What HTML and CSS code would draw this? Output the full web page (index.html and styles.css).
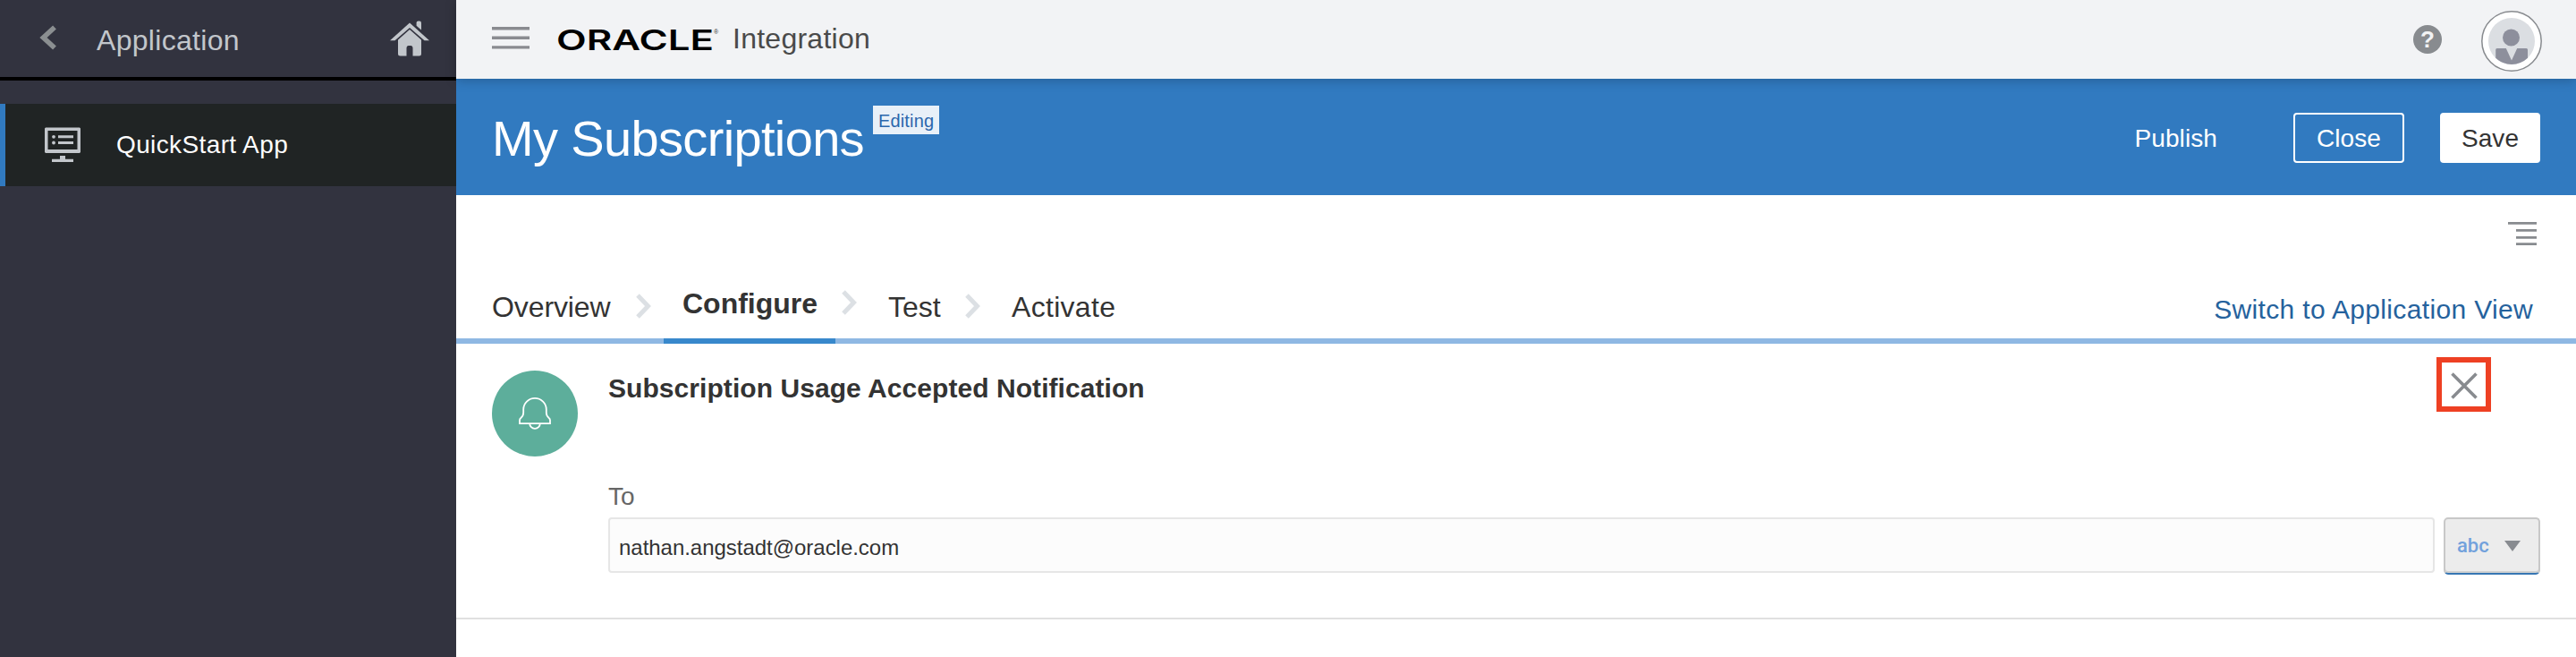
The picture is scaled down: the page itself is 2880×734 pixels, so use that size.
FILE: index.html
```html
<!DOCTYPE html>
<html lang="en">
<head>
<meta charset="utf-8">
<title>My Subscriptions - Oracle Integration</title>
<link rel="stylesheet" href="styles.css">
</head>
<body>
<div class="app">
  <aside class="sidebar">
    <div class="sidebar-head">
      <svg class="back-icon" width="20" height="28" viewBox="0 0 20 28"><path d="M17 2.5 4.5 14 17 25.500" fill="none" stroke="#8b8f91" stroke-width="5.600"/></svg>
      <span class="sidebar-title">Application</span>
      <svg class="home-icon" width="44" height="40" viewBox="0 0 44 40" fill="#c2c6cb"><path d="M22 2.500 44 22.300H38.500L22 8 5.500 22.300H0Z"/><path d="M29.600 2.500Q29.600.5 31.600.5H33Q35 .5 35 2.500V10.500L29.600 5.800Z"/><path d="M22 10 35 21.500V37Q35 39.500 32.500 39.500H25.500V30.500Q25.500 28 23.500 28H20.500Q18.500 28 18.500 30.500V39.500H11.500Q9 39.500 9 37V21.500Z"/></svg>
    </div>
    <nav>
      <a class="nav-item">
        <svg class="nav-icon" width="40" height="40" viewBox="0 0 40 40" fill="#c2c6cb"><path fill-rule="evenodd" d="M1 .5H39L40 1.500V28L39 29H1L0 28V1.500ZM3.500 4V25H36.500V4Z"/><path d="M15 9.300H32V12.300H15ZM15 16H32V19H15ZM17 32H23V35.700H32V39H8V35.700H17Z"/><circle cx="10" cy="10.800" r="1.900"/><circle cx="10" cy="17.500" r="1.900"/></svg>
        <span>QuickStart App</span>
      </a>
    </nav>
  </aside>
  <main class="main">
    <header class="topbar">
      <svg class="burger" width="42" height="25" viewBox="0 0 42 25" fill="#8a8b90"><path d="M0 0H42V3.400H0ZM0 10.600H42V14H0ZM0 21.200H42V24.600H0Z"/></svg>
      <svg class="brand" width="182" height="36" viewBox="0 0 182 36"><text class="brand-name" x="-1" y="29.500" textLength="176" lengthAdjust="spacingAndGlyphs">ORACLE</text><text class="brand-mark" x="175" y="12">®</text></svg>
      <span class="product">Integration</span>
      <span class="help">?</span>
      <svg class="avatar" width="68" height="68" viewBox="0 0 68 68"><circle cx="34" cy="34" r="33.200" fill="#fff" stroke="#888b8f" stroke-width="1.500"/><circle cx="34" cy="34" r="26" fill="#dbdee2"/><circle cx="33.500" cy="30" r="9.500" fill="#8d8f9c"/><path d="M16.200 43.500Q16.200 42 17.700 42H27.800L34 55.500 40.200 42H50.500Q52 42 52 43.500V52.800A26 26 0 0 1 16.200 52.800Z" fill="#8d8f9c"/></svg>
    </header>
    <section class="banner">
      <h1>My Subscriptions</h1>
      <span class="badge">Editing</span>
      <div class="actions">
        <button class="btn publish">Publish</button>
        <button class="btn close">Close</button>
        <button class="btn save">Save</button>
      </div>
    </section>
    <div class="toolbar">
      <svg width="32" height="26" viewBox="0 0 32 26" fill="#888b8f"><path d="M0 0H32V2.700H0ZM9 8H32V10.700H9ZM9 16H32V18.700H9ZM9 23.200H32V25.900H9Z"/></svg>
    </div>
    <nav class="tabs">
      <a class="tab overview">Overview</a>
      <svg class="chevron first" width="19" height="28" viewBox="0 0 19 28"><path d="M3 2 14.500 14 3 26"/></svg>
      <a class="tab active">Configure</a>
      <svg class="chevron second" width="19" height="28" viewBox="0 0 19 28"><path d="M3 2 14.500 14 3 26"/></svg>
      <a class="tab test">Test</a>
      <svg class="chevron third" width="19" height="28" viewBox="0 0 19 28"><path d="M3 2 14.500 14 3 26"/></svg>
      <a class="tab activate">Activate</a>
      <a class="switch">Switch to Application View</a>
    </nav>
    <section class="card">
      <div class="bell">
        <svg width="36" height="36" viewBox="0 0 36 36" fill="none" stroke="#fff" stroke-width="1.800"><path d="M1 29.200V25.500Q1 23.800 2.500 22.700 5.200 20.600 5.200 17V13.500A12.800 12.600 0 0 1 30.800 13.500V17Q30.800 20.600 33.500 22.700 35 23.800 35 25.500V29.200ZM12.200 29.200A5.800 5.600 0 0 0 23.800 29.200"/></svg>
      </div>
      <div class="card-body">
        <div class="card-head">
          <h2>Subscription Usage Accepted Notification</h2>
          <button class="remove"><svg width="30" height="30" viewBox="0 0 30 30"><path d="M1.500 1.500 28.500 28.500M28.500 1.500 1.500 28.500" stroke="#888b8f" stroke-width="3.600"/></svg></button>
        </div>
        <label class="label">To</label>
        <div class="field">
          <div class="input">nathan.angstadt@oracle.com</div>
          <button class="type"><span>abc</span><svg width="18" height="12" viewBox="0 0 18 12"><path d="M0 0H18L9 12Z" fill="#888b90"/></svg></button>
        </div>
      </div>
    </section>
  </main>
</div>
</body>
</html>
```
FILE: styles.css
```css
* { box-sizing: border-box; }
body { margin: 0; font-family: "Liberation Sans", Arial, sans-serif; color: #333; background: #fff; }
svg { display: block; flex: none; }
h1, h2 { margin: 0; }
button { margin: 0; font-family: inherit; }
a, span, h1, h2, button { white-space: nowrap; }
.app { display: flex; width: 2880px; height: 734px; overflow: hidden; }

.sidebar { width: 510px; flex: none; background: #32333f; }
.sidebar-head { height: 90px; border-bottom: 4px solid #000; display: flex; align-items: center; padding-left: 44px; }
.sidebar-title { margin-left: 44px; margin-top: 4px; width: 328px; font-size: 32px; letter-spacing: .3px; color: #c2c6cb; }
.back-icon { margin-bottom: 2px; }
.nav-item { display: flex; align-items: center; margin-top: 26px; height: 92px; border-left: 6px solid #317ac0; padding-left: 44px; background: #202424; color: #fff; font-size: 28px; letter-spacing: .38px; }
.nav-icon { margin-right: 40px; }

.main { flex: 1; min-width: 0; display: flex; flex-direction: column; }
.topbar { position: relative; height: 88px; flex: none; display: flex; align-items: center; padding: 0 38px 0 40px; background: #f2f3f5; box-shadow: 0 2px 12px rgba(0, 0, 0, .22); }
.burger { margin-bottom: 3px; }
.brand { margin-left: 31px; overflow: visible; }
.brand-name { font: 600 31px "Inter", sans-serif; fill: #000; }
.brand-mark { font: 7px "Liberation Sans", sans-serif; fill: #333; }
.product { margin: 0 auto 2px 14px; font-size: 32px; letter-spacing: .25px; color: #4a4a4a; }
.help { width: 32px; height: 32px; border-radius: 50%; background: #888b8f; color: #f2f3f5; font-size: 26px; font-weight: bold; line-height: 32px; text-align: center; }
.avatar { margin: 4px 0 0 44px; }

.banner { height: 130px; flex: none; display: flex; align-items: flex-start; padding: 30px 40px 0; background: #317ac0; color: #fff; }
h1 { width: 426px; padding-top: 4px; font-size: 56px; line-height: 66px; font-weight: normal; letter-spacing: -.65px; }
.badge { width: 74px; height: 32px; padding-left: 6px; background: #e8f0f8; color: #2b67ad; font-size: 20px; line-height: 34px; letter-spacing: .15px; }
.actions { display: flex; margin: 8px 0 0 auto; }
.btn { height: 56px; padding: 0; border: 2px solid transparent; border-radius: 4px; background: transparent; color: #fff; font-size: 28px; line-height: 54px; letter-spacing: .1px; }
.close { width: 124px; margin-left: 83px; border-color: #fff; }
.save { width: 112px; margin-left: 40px; background: #fff; color: #333; }

.toolbar { height: 90px; flex: none; display: flex; justify-content: flex-end; padding: 30px 44px 0 0; }
.tabs { height: 76px; flex: none; display: flex; padding-left: 40px; border-bottom: 6px solid #8fb8e3; font-size: 32px; line-height: 70px; }
.overview { width: 160px; letter-spacing: -.1px; }
.chevron { margin-top: 20px; fill: none; stroke: #dce0e4; stroke-width: 5px; }
.active { width: 192px; height: 76px; margin-left: 13px; padding-left: 21px; line-height: 62px; font-weight: bold; border-bottom: 6px solid #3888cc; }
.second { margin: 16px 0 0 6px; }
.test { width: 85px; margin-left: 34px; }
.activate { margin-left: 34px; letter-spacing: .3px; }
.switch { margin-left: auto; padding-right: 48px; font-size: 30px; line-height: 75px; letter-spacing: .34px; color: #25629d; }

.card { height: 308px; flex: none; display: flex; padding: 0 40px; border-bottom: 2px solid #e0e0e0; }
.bell { width: 96px; height: 96px; margin: 30px 34px 0 0; flex: none; border-radius: 50%; background: #5dae9b; display: flex; align-items: center; justify-content: center; }
.card-body { flex: 1; }
.card-head { display: flex; justify-content: space-between; height: 150px; padding: 15px 55px 0 0; }
h2 { font-size: 30px; line-height: 70px; letter-spacing: .06px; }
.remove { width: 61px; height: 61px; padding: 2px 0 0; border: 6px solid #ee4023; background: #fff; display: flex; align-items: center; justify-content: center; }
.label { display: block; height: 44px; line-height: 42px; font-size: 28px; color: #666; }
.field { display: flex; gap: 10px; }
.input { flex: 1; height: 62px; padding: 2px 0 0 10px; border: 2px solid #e6e6e6; border-radius: 4px; background: #fcfcfc; font-size: 24px; line-height: 60px; letter-spacing: -.03px; }
.type { width: 108px; height: 64px; padding: 0 20px 0 13px; border: 2px solid #c8c8c8; border-bottom-color: #3877b3; border-radius: 5px; background: #ececec; display: flex; align-items: center; justify-content: space-between; box-shadow: inset 0 -2px #d1d1d1; }
.type span { font-family: Roboto, sans-serif; font-size: 22px; font-weight: 500; line-height: 24px; color: #72a1dc; }
```
